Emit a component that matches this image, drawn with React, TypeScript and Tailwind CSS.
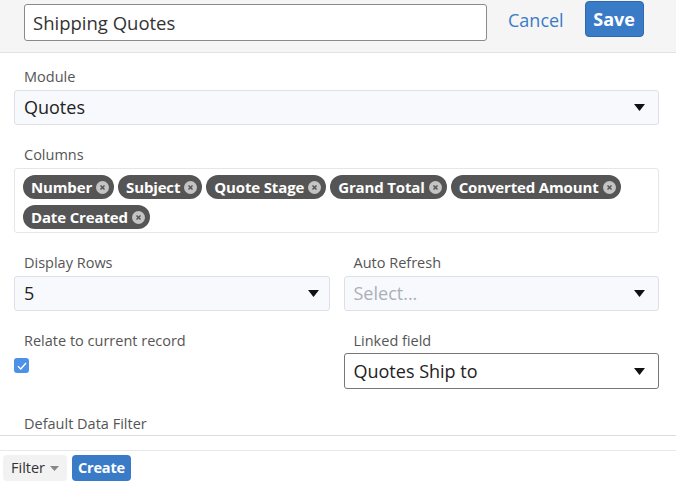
import React from "react";

const Arrow = () => (
  <svg width="11" height="7" viewBox="0 0 11 7" className="shrink-0">
    <path d="M0 0 H11 L5.5 7 Z" fill="#111" />
  </svg>
);

const Tag = ({ label }: { label: string }) => (
  <span className="inline-flex items-center h-[24px] rounded-full bg-[#555555] pl-[8px] pr-[5px] text-white font-bold text-[15px] tracking-[-0.15px] leading-none">
    {label}
    <span className="ml-[4px] inline-flex items-center justify-center w-[13px] h-[13px] rounded-full bg-[#c4c4c4]">
      <svg width="7" height="7" viewBox="0 0 7 7">
        <path d="M1.5 1.5 L5.5 5.5 M5.5 1.5 L1.5 5.5" stroke="#555" strokeWidth="1.5" />
      </svg>
    </span>
  </span>
);

const Label = ({ children }: { children: React.ReactNode }) => (
  <div className="pl-[10px] h-[20px] leading-[20px] text-[14.5px] text-[#555]">{children}</div>
);

export default function App() {
  return (
    <div className="w-[681px] h-[490px] bg-white overflow-hidden" style={{ fontFamily: '"Open Sans", sans-serif' }}>
      <div className="w-[676px]">
        <div className="h-[53px] bg-[#f5f5f5] border-b border-[#e2e2e2] flex items-start">
          <div className="ml-[24px] mt-[4px] w-[463px] h-[37px] bg-white border border-[#8a8a8a] rounded-[3px] pl-[8px] flex items-center text-[18.5px] text-[#333]">
            Shipping Quotes
          </div>
          <div className="ml-[21px] mt-[7px] text-[18px] text-[#3a7bc8]">Cancel</div>
          <div className="ml-[21px] mt-[1px] w-[59px] h-[36px] bg-[#3a7bc8] border border-[#2f6aad] rounded-[4px] flex items-center justify-center text-white font-bold text-[18px]">
            Save
          </div>
        </div>

        <div className="pl-[14px] w-[659px] pt-[14px]">
          <Label>Module</Label>
          <div className="mt-[3px] h-[35px] bg-[#f8f9fc] border border-[#dde1e7] rounded-[3px] flex items-center justify-between pl-[9px] pr-[13px] text-[18px] text-[#222]">
            Quotes
            <Arrow />
          </div>

          <div className="mt-[20px]">
            <Label>Columns</Label>
          </div>
          <div className="mt-[3px] h-[65px] bg-white border border-[#e6e6e6] rounded-[3px] pl-[8px] pt-[6px] flex flex-wrap content-start gap-x-[4px] gap-y-[6px]">
            <Tag label="Number" />
            <Tag label="Subject" />
            <Tag label="Quote Stage" />
            <Tag label="Grand Total" />
            <Tag label="Converted Amount" />
            <Tag label="Date Created" />
          </div>

          <div className="mt-[20px] grid grid-cols-2 gap-x-[14px]">
            <div>
              <Label>Display Rows</Label>
              <div className="mt-[3px] h-[35px] bg-[#f8f9fc] border border-[#dde1e7] rounded-[3px] flex items-center justify-between pl-[9px] pr-[10px] text-[18px] text-[#222]">
                5
                <Arrow />
              </div>
            </div>
            <div>
              <Label>Auto Refresh</Label>
              <div className="mt-[3px] h-[35px] bg-[#f8f9fc] border border-[#dde1e7] rounded-[3px] flex items-center justify-between pl-[9px] pr-[13px] text-[18px] text-[#aab0b8]">
                Select...
                <Arrow />
              </div>
            </div>
          </div>

          <div className="mt-[20px] grid grid-cols-2 gap-x-[14px]">
            <div>
              <Label>Relate to current record</Label>
              <div className="mt-[7px] w-[15px] h-[15px] rounded-[3px] bg-[#4d90e8] flex items-center justify-center">
                <svg width="10" height="8" viewBox="0 0 10 8">
                  <path d="M1 4.2 L3.8 7 L9 1" stroke="white" strokeWidth="1.4" fill="none" />
                </svg>
              </div>
            </div>
            <div>
              <Label>Linked field</Label>
              <div className="mt-[2px] h-[36px] bg-white border border-[#777] rounded-[3px] flex items-center justify-between pl-[9px] pr-[13px] text-[18px] text-[#222]">
                Quotes Ship to
                <Arrow />
              </div>
            </div>
          </div>

          <div className="mt-[25px]">
            <Label>Default Data Filter</Label>
          </div>
        </div>

        <div className="mt-[1px] border-t border-[#dcdcdc] h-[15px]" />
        <div className="border-t border-[#e8e8e8] pt-[4px] pl-[3px] flex items-start gap-[5px]">
          <div className="h-[26px] pl-[8px] pr-[8px] bg-[#f2f2f2] rounded-[4px] flex items-center text-[14.5px] text-[#333]">
            Filter
            <svg width="9" height="5" viewBox="0 0 9 5" className="ml-[5px]">
              <path d="M0 0 H9 L4.5 5 Z" fill="#888" />
            </svg>
          </div>
          <div className="h-[26px] px-[6px] bg-[#3a7bc8] rounded-[4px] flex items-center text-[14.5px] font-bold tracking-[-0.2px] text-white">
            Create
          </div>
        </div>
      </div>
    </div>
  );
}
